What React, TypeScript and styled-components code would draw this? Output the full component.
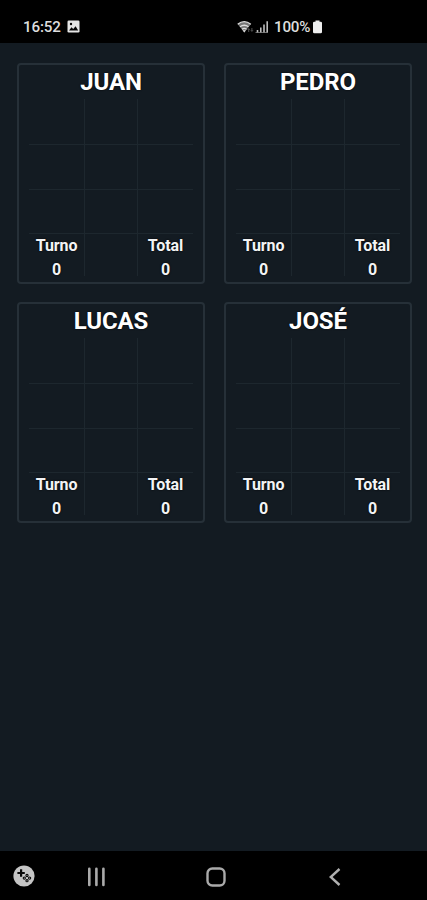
import React from "react";
import styled, { createGlobalStyle } from "styled-components";

const GlobalStyle = createGlobalStyle`
  * { box-sizing: border-box; }
  body { margin: 0; background: #131b22; }
`;

const Screen = styled.div`
  display: flex;
  flex-direction: column;
  width: 427px;
  height: 900px;
  overflow: hidden;
  background: #131b22;
  color: #fff;
  font-family: Roboto, "Liberation Sans", sans-serif;
`;

const StatusBar = styled.header`
  display: flex;
  align-items: center;
  flex: none;
  height: 43px;
  padding: 10px 104px 0 23px;
  background: #000;
  color: #dedede;
  font-size: 15.2px;
  font-weight: 500;
  line-height: 18px;
`;

const Clock = styled.span`
  width: 38px;
  margin-right: 6px;
  letter-spacing: -0.15px;
`;

const StatusIcons = styled.div`
  display: flex;
  align-items: center;
  margin-left: auto;
`;

const Battery = styled.span`
  width: 38px;
  margin-left: 5px;
  letter-spacing: -0.2px;
`;

const Players = styled.main`
  display: grid;
  flex: 1;
  grid-template-columns: 188px 188px;
  grid-auto-rows: 221px;
  align-content: start;
  gap: 18px 19px;
  padding: 20px 0 0 17px;
`;

const Card = styled.section`
  display: flex;
  flex-direction: column;
  padding: 0 10px 6px;
  border: 2px solid #263038;
  border-radius: 4px;
`;

const Name = styled.h2`
  height: 34px;
  margin: 0;
  color: #fff;
  font-size: 24px;
  font-weight: 700;
  line-height: 34px;
  letter-spacing: -0.1px;
  text-align: center;
  text-shadow: 0 0 2px #000;
`;

const Board = styled.div`
  display: grid;
  flex: 1;
  min-height: 0;
  grid-template-columns: 56px 53px minmax(0, 1fr);
  grid-template-rows: 46px 45px 44px minmax(0, 1fr);
`;

const Cell = styled.div<{ $right: boolean; $bottom: boolean }>`
  display: flex;
  flex-direction: column;
  align-items: center;
  min-height: 0;
  border-right: ${(p) => (p.$right ? "1px solid #1d272e" : "0")};
  border-bottom: ${(p) => (p.$bottom ? "1px solid #1d272e" : "0")};
`;

const Score = styled.div`
  flex: none;
  width: 54px;
  color: #f3f4f5;
  font-size: 16px;
  font-weight: 700;
  line-height: 23.5px;
  letter-spacing: -0.1px;
  text-align: center;
  text-shadow: 0 0 2px #000;
`;

const NavBar = styled.footer`
  display: grid;
  flex: none;
  grid-template-columns: 47px 98px 141px 97px;
  align-items: center;
  justify-items: center;
  height: 49px;
  padding-top: 2px;
  background: #000;
`;

const GameIcon = styled.svg`
  display: block;
  margin-top: -2px;
`;

const Icon = styled.svg`
  display: block;
`;

const labels: Record<number, string> = { 9: "Turno", 11: "Total" };

function PlayerCard({ name }: { name: string }) {
  return (
    <Card>
      <Name>{name}</Name>
      <Board>
        {Array.from({ length: 12 }, (_, i) => (
          <Cell key={i} $right={i % 3 < 2} $bottom={i < 9}>
            {labels[i] && (
              <Score>
                <div>{labels[i]}</div>
                <div>0</div>
              </Score>
            )}
          </Cell>
        ))}
      </Board>
    </Card>
  );
}

export default function App() {
  return (
    <Screen>
      <GlobalStyle />
      <StatusBar>
        <Clock>16:52</Clock>
        <Icon width="13" height="13" viewBox="0 0 13 13">
          <rect x="0.5" y="0.5" width="12" height="12" rx="1.3" fill="#e6e6e6" />
          <path d="M2 10.5 4.5 7.2 6.2 9 8.6 6.2 11.2 10.5Z" fill="#050505" />
          <circle cx="4" cy="4" r="1.2" fill="#050505" />
        </Icon>
        <StatusIcons>
          <Icon width="17" height="14" viewBox="0 0 17 14">
            <path d="M0.8 4.2Q7.2-1 13.8 4.2L7.3 12.5Z" fill="#777" />
            <path d="M.7 4.2Q7.2-1 13.8 4.2M3 6.7q4.2-3 8.5 0M5 9.2q2.2-1.7 4.6 0" fill="none" stroke="#ddd" strokeWidth="1.4" />
            <path d="M5.6 10.2h3.2l-1.5 2.2Z" fill="#ddd" />
            <path d="M11.7 12V8.7m-1 1 1-1 1 1M14.9 8v3.3m-1-1 1 1 1-1" fill="none" stroke="#686868" strokeWidth=".8" />
          </Icon>
          <Icon width="15" height="14" viewBox="0 0 15 14">
            <path d="M3.5 12.5V10M6.8 12.5V7.5M10 12.5V4.5M13.2 12.5V1.2" fill="none" stroke="#bdbdbd" strokeWidth="1.6" />
            <path d="M1.5 12.5H14" stroke="#999" strokeWidth=".7" />
          </Icon>
          <Battery>100%</Battery>
          <Icon width="11" height="14" viewBox="0 0 11 14">
            <path d="M3.5 .5h4v1.3h1.2q1.3 0 1.3 1.3v8.8q0 1.4-1.4 1.4H2.4Q1 13.3 1 11.9V3.1q0-1.3 1.3-1.3h1.2Z" fill="#eee" />
          </Icon>
        </StatusIcons>
      </StatusBar>
      <Players>
        {["JUAN", "PEDRO", "LUCAS", "JOSÉ"].map((name) => (
          <PlayerCard key={name} name={name} />
        ))}
      </Players>
      <NavBar>
        <GameIcon width="22" height="22" viewBox="0 0 22 22">
          <circle cx="11" cy="11" r="10.6" fill="#c5c5c5" />
          <path d="M7 4.3h2.2v2.6h2.6v2.2H9.2v2.6H7V9.1H4.4V6.9H7Z" fill="#090909" />
          <g fill="none" stroke="#090909" strokeWidth="1.1">
            <circle cx="14" cy="10.5" r="1.1" />
            <circle cx="11.3" cy="13.1" r="1.1" />
            <circle cx="16.6" cy="13.1" r="1.1" />
            <circle cx="14" cy="15.7" r="1.1" />
          </g>
        </GameIcon>
        <Icon width="19" height="20" viewBox="0 0 19 20">
          <path d="M2.3 1.7V18M9.4 1.7V18M16.4 1.7V18" stroke="#aaa" strokeWidth="2.6" strokeLinecap="round" />
        </Icon>
        <Icon width="20" height="20" viewBox="0 0 20 20">
          <rect x="1.5" y="1.5" width="17" height="17" rx="4.8" fill="none" stroke="#aaa" strokeWidth="2.4" />
        </Icon>
        <Icon width="12" height="20" viewBox="0 0 12 20">
          <path d="M10.5 2 1.7 10l8.8 8" fill="none" stroke="#b0b0b0" strokeWidth="2.4" />
        </Icon>
      </NavBar>
    </Screen>
  );
}
